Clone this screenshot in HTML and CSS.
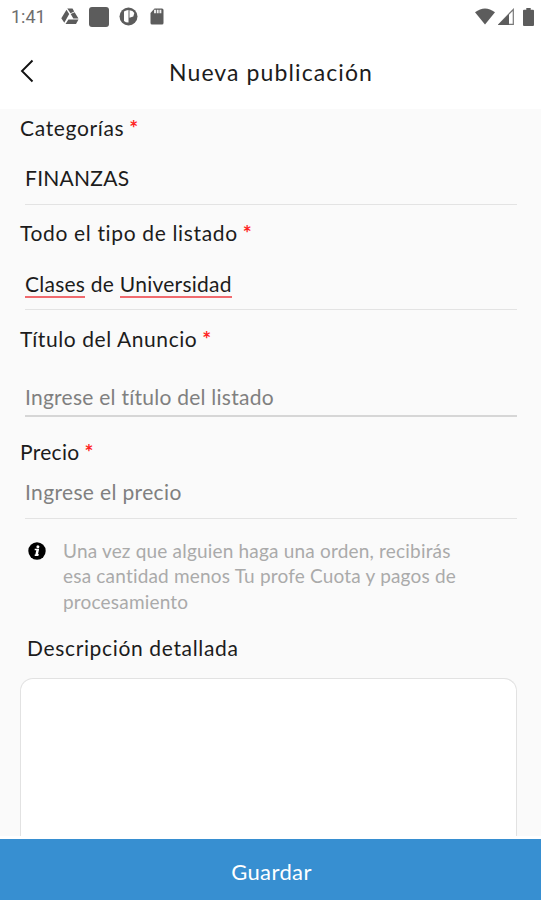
FILE: index.html
```html
<!DOCTYPE html>
<html lang="es">

<head>
  <meta charset="UTF-8">
  <meta name="viewport" content="width=device-width, initial-scale=1.0">
  <title>Nueva publicación</title>
  <link rel="stylesheet" href="styles.css">
</head>

<body>
  <div class="screen">
    <!-- Status bar -->
    <div class="status-bar">
      <span class="clock">1:41</span>
      <svg class="drive-icon" width="18" height="17" viewBox="0 0 18 17" fill="#5c5c5c">
        <path d="M6.200.6h5.300l1.700 2.900-3.700 1.700-2.700-4zM5.500 1.700l2.700 4.300-4.900 8.700L.3 10.200zM9.700 6l3.900-1.700 3.900 6.200h-5.200zM7.400 11.500h10.100l-2.500 4.500H4.500z" />
      </svg>
      <span class="square-icon"></span>
      <svg class="circle-icon" width="19" height="19" viewBox="0 0 19 19">
        <circle cx="9.500" cy="9.500" r="9" fill="#5c5c5c" />
        <path d="M5 4.500Q7 3 9.500 3v12.500Q6.500 15.500 5 14z" fill="#fff" />
        <path d="M10.500 3.200Q14 3.500 15.300 6l-1 3.500-3.800 1.300z" fill="#fff" />
      </svg>
      <svg class="card-icon" width="14" height="17" viewBox="0 0 14 17">
        <path d="M4.500.5H12A1.500 1.500 0 0 1 13.500 2v13a1.500 1.500 0 0 1-1.500 1.500H2A1.500 1.500 0 0 1 .5 15V5z" fill="#5c5c5c" />
        <path d="M5 1.700v3.500M7.700 1.700v3.500M10.400 1.700v3.500" stroke="#eee" stroke-width="1.900" />
      </svg>
      <div class="status-right">
        <svg width="20" height="17" viewBox="0 0 20 17">
          <path d="M0 4.200Q10-3.400 20 4.200L10 16.500z" fill="#5c5c5c" />
        </svg>
        <svg width="16" height="17" viewBox="0 0 16 17">
          <path d="M15.300 1.500v14.800H1z" fill="#fff" stroke="#777" stroke-width="1.200" />
          <path d="M11 6v11H0z" fill="#5c5c5c" />
        </svg>
        <svg class="battery-icon" width="11" height="18" viewBox="0 0 11 18">
          <path d="M3.300 0h4.400v1.800H10a1 1 0 0 1 1 1V17a1 1 0 0 1-1 1H1a1 1 0 0 1-1-1V2.800a1 1 0 0 1 1-1h2.300z" fill="#5c5c5c" />
        </svg>
      </div>
    </div>

    <!-- Header -->
    <header class="header">
      <svg class="back-icon" width="14" height="24" viewBox="0 0 14 24" fill="none" stroke="#111" stroke-width="1.900">
        <path d="M12.500 1.500L2 12l10.500 10.500" />
      </svg>
      <h1>Nueva publicación</h1>
    </header>

    <!-- Form -->
    <main class="form">
      <div class="field category">
        <div class="label">Categorías <span class="required">*</span></div>
        <div class="value">FINANZAS</div>
      </div>
      <div class="field listing">
        <div class="label">Todo el tipo de listado <span class="required">*</span></div>
        <div class="value"><span class="misspelled">Clases</span> de <span class="misspelled">Universidad</span></div>
      </div>
      <div class="field ad-title">
        <div class="label">Título del Anuncio <span class="required">*</span></div>
        <div class="value placeholder">Ingrese el título del listado</div>
      </div>
      <div class="field price">
        <div class="label">Precio <span class="required">*</span></div>
        <div class="value placeholder">Ingrese el precio</div>
      </div>

      <div class="info">
        <svg width="18" height="18" viewBox="0 0 18 18">
          <circle cx="9" cy="9" r="8.700" fill="#000" />
          <circle cx="9.900" cy="4.700" r="1.500" fill="#fff" />
          <path d="M6.700 7.500h3.600L9.200 12.700h1.500M6.700 13.200h3.500" fill="none" stroke="#fff" stroke-width="1.400" />
          <path d="M8.400 7.500h2l-1.300 6H7.200z" fill="#fff" />
        </svg>
        <p>
          Una vez que alguien haga una orden, recibirás<br>
          esa cantidad menos Tu profe Cuota y pagos de<br>
          procesamiento
        </p>
      </div>

      <div class="description-label">Descripción detallada</div>
      <div class="description-box"></div>
    </main>

    <button class="save-button">Guardar</button>
  </div>
</body>

</html>
```

FILE: styles.css
```css
/* General Reset */
* {
  margin: 0;
  padding: 0;
  box-sizing: border-box;
}

body {
  font-family: Lato, sans-serif;
  background-color: #fff;
  color: #1c1c1c;
}

.screen {
  display: flex;
  flex-direction: column;
  width: 541px;
  height: 900px;
  overflow: hidden;
}

/* Status bar */
.status-bar {
  display: flex;
  flex: none;
  align-items: center;
  height: 33px;
  padding: 0 7px 0 11px;
}

.clock {
  width: 50px;
  font-family: Roboto, sans-serif;
  font-size: 18px;
  color: #6e6e6e;
}

.square-icon {
  width: 20px;
  height: 20px;
  margin: 0 10px;
  border-radius: 3px;
  background-color: #5c5c5c;
}

.card-icon {
  margin-left: 12px;
}

.status-right {
  display: flex;
  align-items: center;
  gap: 3px;
  margin-left: auto;
}

.battery-icon {
  margin-left: 6px;
}

/* Header */
.header {
  display: flex;
  flex: none;
  align-items: center;
  height: 76px;
  padding: 0 20px;
}

.header h1 {
  margin: 1px 0 0 135px;
  font-size: 23px;
  font-weight: 400;
  letter-spacing: 1.1px;
  white-space: nowrap;
}

/* Form */
.form {
  flex: none;
  padding: 5px 24px 0 20px;
  background-color: #fafafa;
}

.label,
.value,
.description-label {
  font-size: 21px;
  line-height: 28px;
  white-space: nowrap;
}

.label {
  display: flex;
  gap: 5px;
  letter-spacing: 0.65px;
}

.required {
  color: #f22;
  font-weight: 700;
}

.value {
  margin-left: 5px;
  border-bottom: 1px solid #e3e3e3;
  letter-spacing: 0.25px;
}

.category .value {
  padding: 22px 0 12px;
}

.listing {
  margin-top: 14px;
}

.listing .value {
  padding: 23px 0 11px;
}

.misspelled {
  border-bottom: 2px solid #f06a6e;
}

.ad-title {
  margin-top: 15px;
}

.ad-title .label {
  letter-spacing: 0.58px;
}

.ad-title .value {
  padding: 30px 0 4px;
  border-bottom: 2px solid #d6d6d6;
}

.price {
  margin-top: 21px;
}

.price .label {
  letter-spacing: 0.3px;
}

.price .value {
  padding: 12px 0 12px;
  letter-spacing: 0.35px;
}

.value.placeholder {
  color: #808080;
}

/* Price note */
.info {
  display: flex;
  gap: 17px;
  margin: 19px 0 0 8px;
  color: #aaa;
}

.info svg {
  flex: none;
  margin-top: 4px;
}

.info p {
  font-size: 19px;
  line-height: 25.400px;
  letter-spacing: 0.19px;
  white-space: nowrap;
}

/* Description */
.description-label {
  margin: 20px 0 0 7px;
  letter-spacing: 0.65px;
}

.description-box {
  height: 158px;
  margin-top: 16px;
  border: 1px solid #e2e2e2;
  border-bottom: none;
  border-radius: 13px 13px 0 0;
  background-color: #fff;
}

/* Save button */
.save-button {
  height: 61px;
  margin-top: auto;
  padding: 4px 0 0 2px;
  border: none;
  background-color: #378fd1;
  color: #fff;
  font-family: inherit;
  font-size: 22px;
  letter-spacing: 0.4px;
}
```
